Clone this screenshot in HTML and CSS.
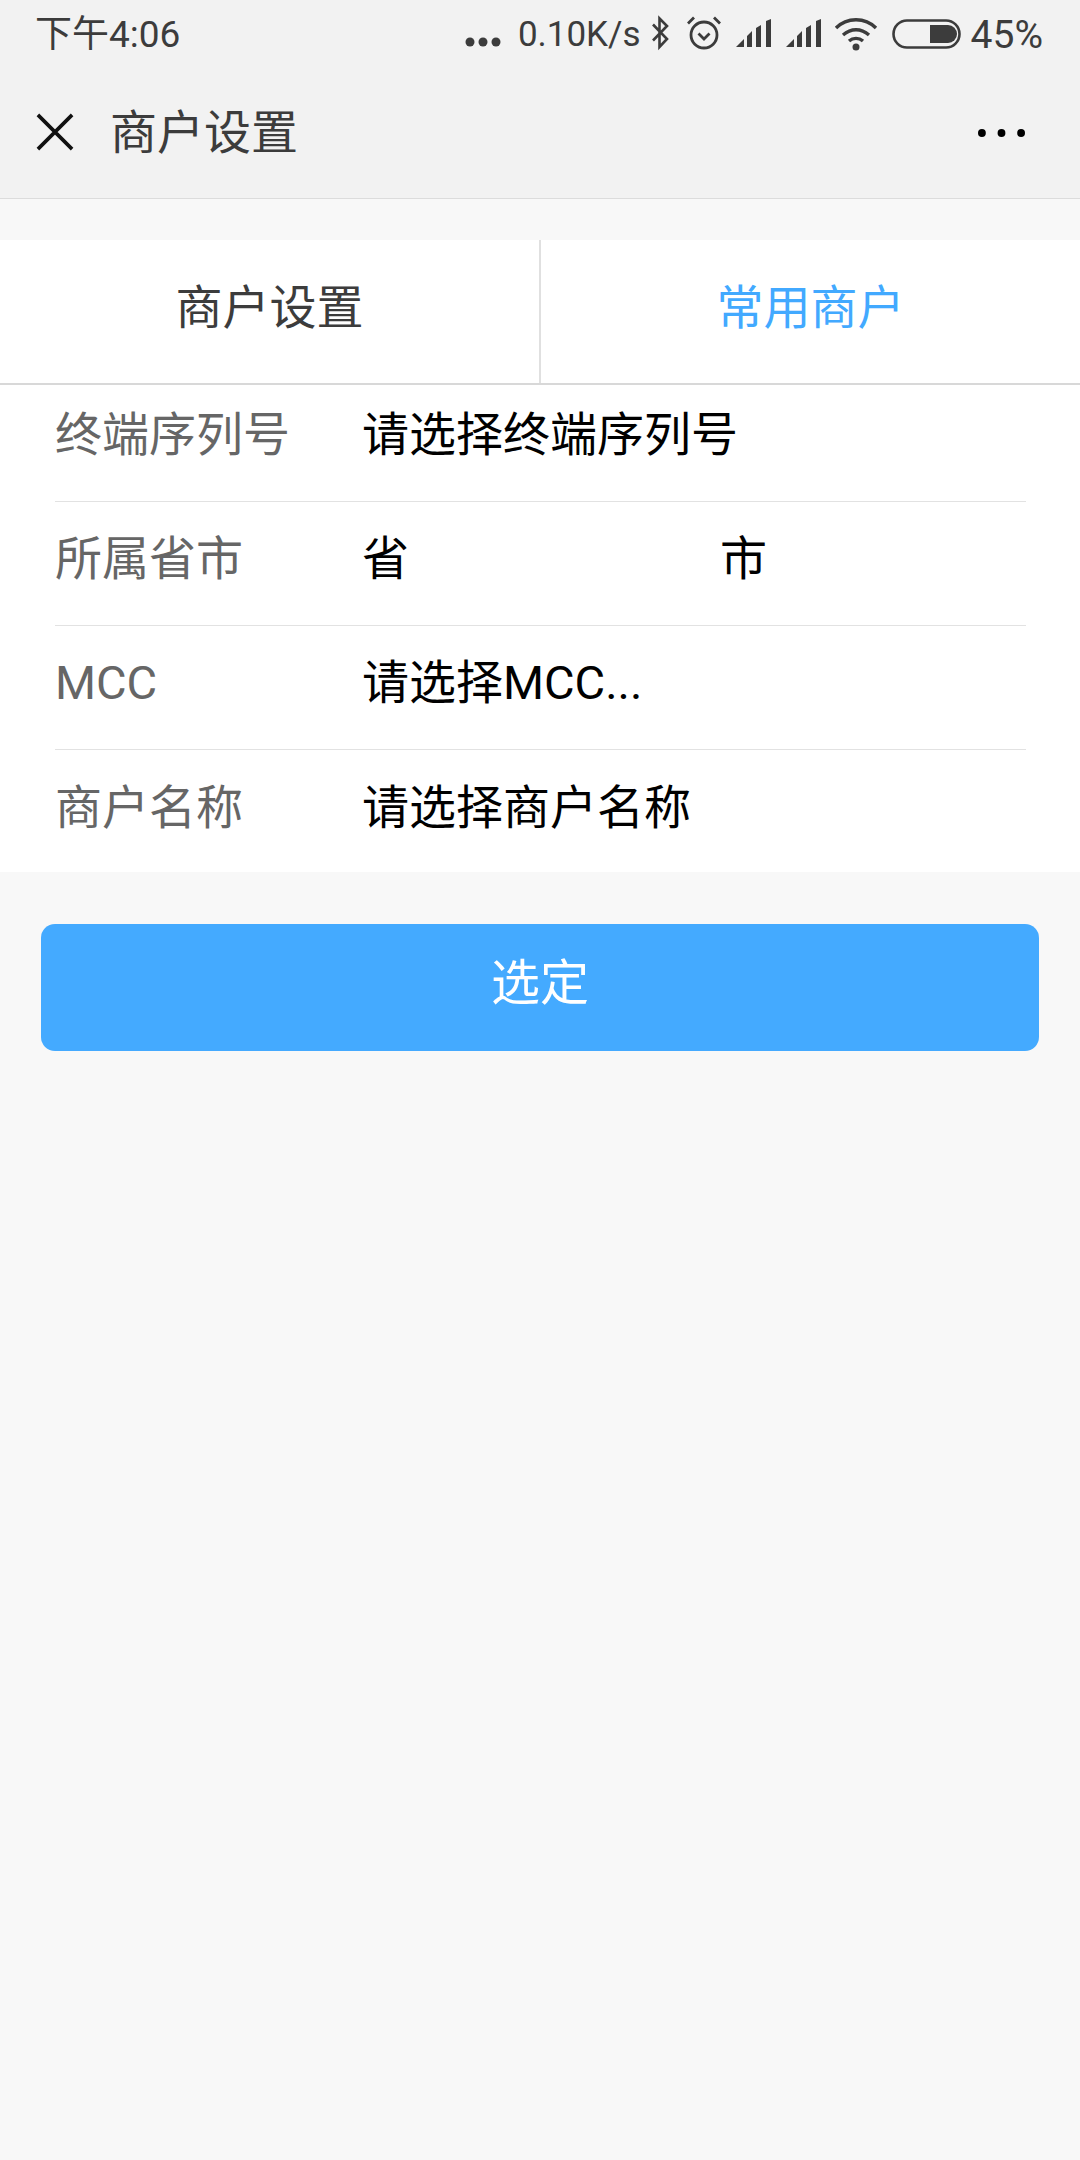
FILE: index.html
```html
<!DOCTYPE html>
<html lang="zh-CN">
<head>
<meta charset="utf-8">
<title>商户设置</title>
<link rel="stylesheet" href="styles.css">
</head>
<body>
<header class="top">
  <div class="status">
    <span class="time">下午4:06</span>
    <div class="status-right">
      <svg class="i-dots" viewBox="0 0 36 10"><circle cx="5" cy="5" r="4.5"/><circle cx="18" cy="5" r="4.5"/><circle cx="31" cy="5" r="4.5"/></svg>
      <span class="speed">0.10K/s</span>
      <svg class="i-bt" viewBox="0 0 21 36"><path d="M3 9.500 17 24l-7.500 8V3.500L17 11 3 25.500" fill="none" stroke="#3c3c3c" stroke-width="2.600"/></svg>
      <svg class="i-alarm" viewBox="0 0 36 36"><circle cx="18" cy="20" r="13" fill="none" stroke="#3c3c3c" stroke-width="2.800"/><path d="M12.500 18.500 18 24l5.500-5.500M2 8.500 8 2.500M34 8.500l-6-6" fill="none" stroke="#3c3c3c" stroke-width="2.800"/></svg>
      <svg class="i-sig" viewBox="0 0 36 30"><path d="M0 29 8 21V29ZM11 18l5-5V29H11ZM20 10l5-3V29H20ZM30 3l5-2V29H30Z"/></svg>
      <svg class="i-sig" viewBox="0 0 36 30"><path d="M0 29 8 21V29ZM11 18l5-5V29H11ZM20 10l5-3V29H20ZM30 3l5-2V29H30Z"/></svg>
      <svg class="i-wifi" viewBox="0 0 44 36"><path d="M2 13C13 2 31 2 42 13M9 20C17 13 27 13 35 20M15 26C19 22.500 25 22.500 29 26" fill="none" stroke="#3c3c3c" stroke-width="3.400"/><circle cx="22" cy="32" r="3.500"/></svg>
      <svg class="i-batt" viewBox="0 0 70 30"><rect x="1.500" y="1.500" width="66" height="27" rx="13.500" fill="none" stroke="#3c3c3c" stroke-width="2.600"/><path d="M38 6H56a9 9 0 0 1 0 18H38Z"/></svg>
      <span class="pct">45%</span>
    </div>
  </div>
  <nav class="nav">
    <svg class="i-close" viewBox="0 0 40 40"><path d="M2 2 38 38M38 2 2 38" fill="none" stroke="#111" stroke-width="3.800"/></svg>
    <h1 class="nav-title">商户设置</h1>
    <svg class="i-more" viewBox="0 0 48 8"><circle cx="4" cy="4" r="4"/><circle cx="24" cy="4" r="4"/><circle cx="44" cy="4" r="4"/></svg>
  </nav>
</header>
<main class="page">
  <div class="tabs">
    <div class="tab">商户设置</div>
    <div class="tab tab-active">常用商户</div>
  </div>
  <div class="list">
    <div class="row row-first">
      <span class="label">终端序列号</span>
      <span class="value">请选择终端序列号</span>
    </div>
    <div class="row">
      <span class="label">所属省市</span>
      <span class="value value-half">省</span>
      <span class="value">市</span>
    </div>
    <div class="row">
      <span class="label">MCC</span>
      <span class="value">请选择MCC...</span>
    </div>
    <div class="row">
      <span class="label">商户名称</span>
      <span class="value">请选择商户名称</span>
    </div>
  </div>
  <button class="confirm" type="button">选定</button>
</main>
</body>
</html>
```
FILE: styles.css
```css
* { box-sizing: border-box; }
html, body { margin: 0; padding: 0; }
body {
  width: 1080px;
  height: 2160px;
  overflow: hidden;
  background: #f8f8f8;
  font-family: Roboto, "Noto Sans CJK SC", sans-serif;
  display: flex;
  flex-direction: column;
}
.top {
  height: 199px;
  background: #f2f2f2;
  border-bottom: 1px solid #dcdcdc;
  color: #3c3c3c;
  flex: none;
}
.status {
  height: 70px;
  display: flex;
  align-items: center;
  justify-content: space-between;
  padding: 0 37px 0 35px;
  fill: #3c3c3c;
}
.time { font-size: 37px; line-height: 44px; margin-top: -1px; }
.status-right { display: flex; align-items: center; }
.speed { font-size: 35px; margin-left: 17px; line-height: 44px; }
.pct { font-size: 39px; margin-left: 9px; line-height: 44px; }
.i-dots { width: 36px; height: 10px; margin-top: 14px; }
.i-bt { width: 21px; height: 38px; margin: -4px 0 0 9px; }
.i-alarm { width: 36px; height: 36px; margin: -4px 0 0 15px; }
.i-sig { width: 36px; height: 30px; margin: -4px 0 0 14px; }
.i-wifi { width: 44px; height: 36px; margin: -4px 0 0 12px; }
.i-batt { width: 70px; height: 30px; margin: -2px 0 0 14px; }
.nav {
  height: 128px;
  display: flex;
  align-items: center;
  padding: 0 55px 6px 36px;
}
.i-close { width: 38px; height: 38px; flex: none; margin-top: 2px; }
.nav-title {
  font-size: 47px;
  line-height: 64px;
  font-weight: 400;
  color: #3c3c3c;
  margin: 4px 0 0 36px;
  flex: 1;
}
.i-more { width: 47px; height: 8px; flex: none; fill: #000; margin-top: 4px; }
.page { flex: 1; display: flex; flex-direction: column; padding-top: 41px; }
.tabs {
  height: 145px;
  display: flex;
  background: #fff;
  border-bottom: 2px solid #d8d8d8;
  flex: none;
}
.tab {
  flex: 1;
  display: flex;
  align-items: center;
  justify-content: center;
  font-size: 47px;
  line-height: 64px;
  color: #3c3c3c;
  padding-bottom: 8px;
}
.tab-active { color: #42a9ff; border-left: 2px solid #e0e0e0; }
.list { background: #fff; padding: 0 54px 0 55px; overflow: hidden; flex: none; height: 487px; }
.row {
  height: 124px;
  display: flex;
  align-items: center;
  border-bottom: 1px solid #e2e2e2;
  font-size: 47px;
  line-height: 64px;
  padding-bottom: 9px;
}
.row:last-child { border-bottom: 0; }
.row-first { margin-top: -7px; }
.label { width: 307px; color: #666; flex: none; }
.value { color: #000; }
.value-half { width: 358px; flex: none; }
.confirm {
  display: block;
  margin: 52px 41px 0;
  height: 127px;
  border: 0;
  border-radius: 14px;
  background: #44aaff;
  color: #fff;
  font-family: inherit;
  font-size: 49px;
  line-height: 64px;
  flex: none;
  padding: 0 0 8px;
}
```
